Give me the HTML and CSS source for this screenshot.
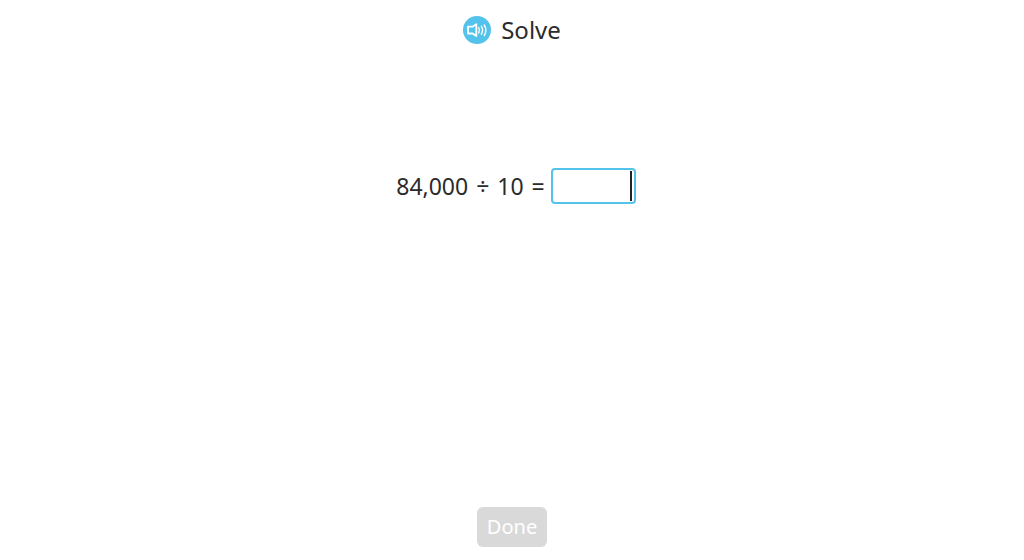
FILE: index.html
```html
<!DOCTYPE html>
<html lang="en">
<head>
    <meta charset="UTF-8">
    <meta name="viewport" content="width=device-width, initial-scale=1.0">
    <title>Solve</title>
    <link rel="stylesheet" href="styles.css">
</head>
<body>
    <header class="question-header">
        <button class="audio-button" type="button" aria-label="Read aloud">
            <svg viewBox="0 0 28 28" width="28" height="28" fill="none" stroke="#ffffff">
                <path d="M5 10.700H9.500L13.300 8.200V20L9.500 17.500H5Z" stroke-width="1.800" stroke-linejoin="round"/>
                <path d="M15.700 11.500Q17.300 14.200 15.700 17M18.400 10.300Q20.800 14.200 18.400 18.200M21.200 9Q24.600 14.200 21.200 19.500" stroke-width="1.400" stroke-linecap="round"/>
            </svg>
        </button>
        <h1>Solve</h1>
    </header>

    <main class="question">
        <label for="answer">84,000 <span class="operator">÷</span> 10 <span class="operator">=</span></label>
        <div class="answer-box">
            <input id="answer" type="text" inputmode="numeric" autocomplete="off">
            <span class="cursor"></span>
        </div>
    </main>

    <footer class="actions">
        <button class="done-button" type="button" disabled>Done</button>
    </footer>
</body>
</html>
```

FILE: styles.css
```css
* {
    box-sizing: border-box;
}

body {
    font-family: 'Noto Sans', sans-serif;
    font-size: 23px;
    color: #2b2b2b;
    background-color: #ffffff;
    margin: 0;
    display: flex;
    flex-direction: column;
    min-height: 100vh;
}

.question-header {
    display: flex;
    justify-content: center;
    align-items: center;
    gap: 10px;
    padding: 12px 16px;
}

h1 {
    margin: 0;
    font-size: 24px;
    font-weight: normal;
    line-height: 36px;
}

.audio-button {
    width: 28px;
    height: 28px;
    padding: 0;
    border: none;
    border-radius: 50%;
    background-color: #54c3ec;
    cursor: pointer;
}

.audio-button svg {
    display: block;
}

.question {
    flex: 1;
    display: flex;
    justify-content: center;
    align-items: flex-start;
    gap: 4px;
    padding: 108px 16px 0 24px;
}

.question label {
    line-height: 36px;
}

.operator {
    margin: 0 2px;
}

.answer-box {
    position: relative;
}

.answer-box input {
    display: block;
    width: 85px;
    height: 36px;
    padding: 0 4px;
    border: 2px solid #54c3ec;
    border-radius: 4px;
    background-color: #ffffff;
    font: inherit;
    color: inherit;
    text-align: right;
    outline: none;
}

.cursor {
    position: absolute;
    top: 3px;
    right: 4px;
    width: 2px;
    height: 30px;
    background-color: #222222;
}

.actions {
    display: flex;
    justify-content: center;
    padding: 0 16px 13px;
}

.done-button {
    height: 40px;
    padding: 0 10px;
    border: none;
    border-radius: 6px;
    background-color: #d9d9d9;
    color: #ffffff;
    font-family: inherit;
    font-size: 20px;
    line-height: 40px;
}
```
